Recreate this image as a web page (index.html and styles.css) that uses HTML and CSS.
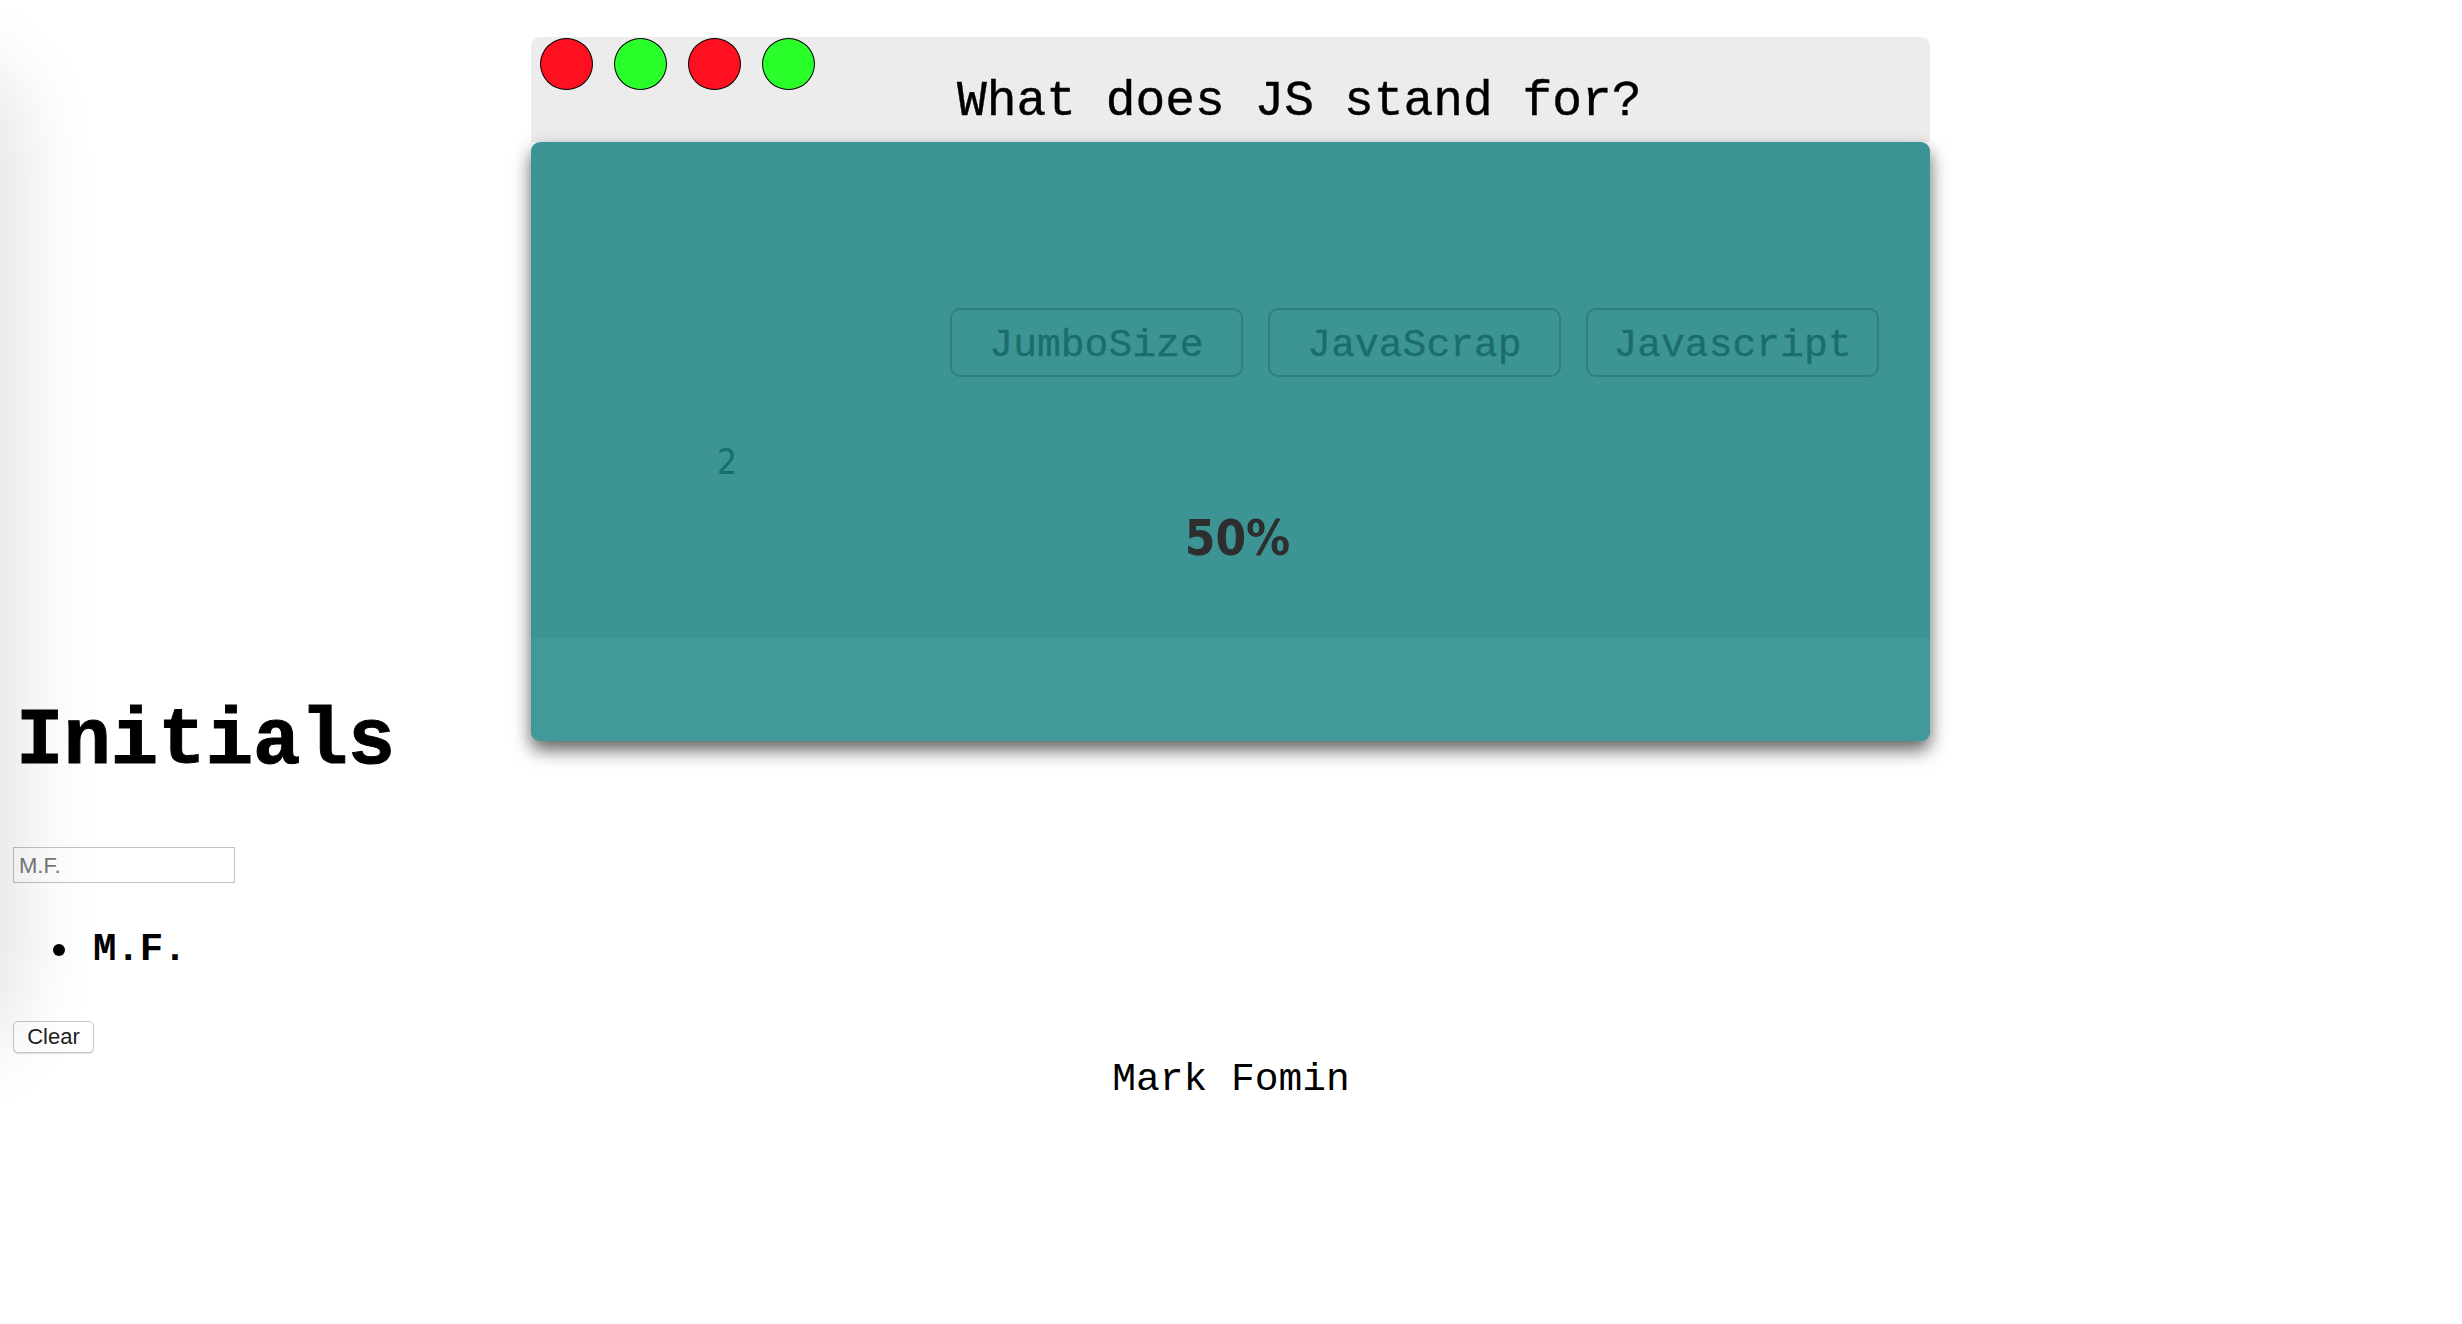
FILE: index.html
```html
<!DOCTYPE html>
<html lang="en">
<head>
<meta charset="utf-8">
<title>Code Quiz</title>
<link rel="stylesheet" href="styles.css">
</head>
<body>
<div class="edge-shade"></div>
<div class="page">
  <section class="quiz-window">
    <header class="window-bar">
      <div class="lights">
        <span class="light red"></span>
        <span class="light green"></span>
        <span class="light red"></span>
        <span class="light green"></span>
      </div>
      <h2 class="question">What does JS stand for?</h2>
    </header>
    <div class="card">
      <div class="choices">
        <button class="choice">JumboSize</button>
        <button class="choice">JavaScrap</button>
        <button class="choice">Javascript</button>
      </div>
      <div class="counter">2</div>
      <div class="score">50%</div>
      <div class="card-foot"></div>
    </div>
  </section>

  <section class="scores">
    <h1 class="scores-title">Initials</h1>
    <input class="initials-input" type="text" placeholder="M.F.">
    <ul class="score-list">
      <li class="score-item">M.F.</li>
    </ul>
    <button class="clear-btn">Clear</button>
  </section>

  <footer class="footer">Mark Fomin</footer>
</div>
</body>
</html>
```
FILE: styles.css
```css
html, body {
  margin: 0;
  padding: 0;
  background: #ffffff;
}

body {
  font-family: "Liberation Mono", "Courier New", monospace;
  color: #000;
  position: relative;
  min-height: 1324px;
  overflow: hidden;
}

.edge-shade {
  position: absolute;
  left: -100px;
  top: 80px;
  width: 100px;
  height: 950px;
  border-radius: 80px;
  box-shadow: 0 0 80px 22px rgba(0, 0, 0, 0.11);
}

.page {
  padding: 0 13px;
}

/* Quiz window floating over the page */
.quiz-window {
  position: absolute;
  top: 37px;
  left: 531px;
  width: 1399px;
}

.window-bar {
  height: 105px;
  background: #ececec;
  border-radius: 9px 9px 0 0;
  display: flex;
  align-items: flex-start;
  padding: 1px 0 0 9px;
  box-sizing: border-box;
}

.lights {
  display: flex;
  gap: 21px;
  flex-shrink: 0;
}

.light {
  width: 51px;
  height: 50px;
  border-radius: 50%;
  border: 1.5px solid #000;
  display: block;
  flex-shrink: 0;
}

.light.red { background: #ff1020; }
.light.green { background: #2bff2b; }

.question {
  margin: 36px 0 0 142px;
  font-size: 49.6px;
  font-weight: normal;
  line-height: normal;
  white-space: nowrap;
  -webkit-text-stroke: 0.4px #000;
}

.card {
  background: #3c9594;
  border-radius: 9px;
  height: 599px;
  box-shadow: 0 9px 18px rgba(0, 0, 0, 0.62);
  display: flex;
  flex-direction: column;
  overflow: hidden;
}

.choices {
  display: flex;
  justify-content: flex-end;
  gap: 25px;
  padding: 166px 51px 0 0;
}

.choice {
  width: 293px;
  height: 69px;
  background: transparent;
  border: 2px solid #2f7f7e;
  border-radius: 10px;
  color: #1b6d6b;
  font-family: "Liberation Mono", "Courier New", monospace;
  font-size: 39.7px;
  padding: 5px 0 0;
  -webkit-text-stroke: 0.3px #1b6d6b;
}

.counter {
  margin: 64px 0 0 186px;
  font-family: "DejaVu Sans Condensed", "DejaVu Sans", sans-serif;
  font-stretch: condensed;
  font-size: 35px;
  line-height: 42px;
  color: #176f6d;
}

.score {
  margin-top: 25px;
  text-align: center;
  font-family: "DejaVu Sans Condensed", "DejaVu Sans", sans-serif;
  font-stretch: condensed;
  font-weight: bold;
  font-size: 49px;
  line-height: 62px;
  color: #2e2e2e;
  padding-left: 14px;
}

.card-foot {
  margin-top: auto;
  height: 103px;
  background: #42999a;
}

/* High scores */
.scores {
  padding-top: 698px;
}

.scores-title {
  margin: 0;
  padding-left: 3px;
  font-size: 79px;
  font-weight: bold;
  line-height: 88px;
  -webkit-text-stroke: 1px #000;
}

.initials-input {
  display: block;
  margin-top: 61px;
  width: 222px;
  height: 36px;
  box-sizing: border-box;
  border: 1.5px solid #c2c2c2;
  padding: 2px 5px 0;
  font-family: "Liberation Sans", Arial, sans-serif;
  font-size: 22px;
  color: #333;
}

.initials-input::placeholder {
  color: #777;
}

.score-list {
  margin: 46px 0 0;
  padding-left: 40px;
  list-style: none;
  font-size: 39px;
  font-weight: bold;
  line-height: 42px;
}

.score-item {
  display: flex;
  align-items: center;
}

.score-item::before {
  content: "";
  width: 12px;
  height: 12px;
  border-radius: 50%;
  background: #000;
  margin-right: 28px;
}

.clear-btn {
  display: block;
  margin-top: 50px;
  width: 81px;
  height: 32px;
  background: #fff;
  border: 1px solid #c8c8c8;
  border-radius: 5px;
  box-shadow: 0 1px 1px rgba(0, 0, 0, 0.12);
  font-family: "Liberation Sans", Arial, sans-serif;
  font-size: 22px;
  color: #222;
  padding: 0;
}

.footer {
  margin-top: 4px;
  text-align: center;
  font-size: 39.6px;
  line-height: 45px;
}
```
